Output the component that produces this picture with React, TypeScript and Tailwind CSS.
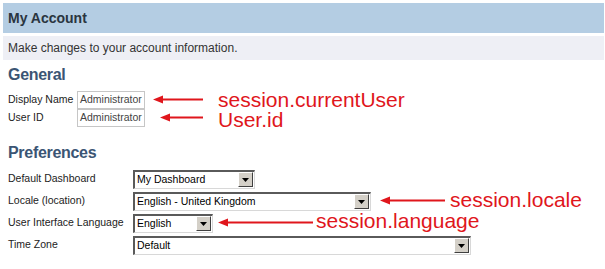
import { FC } from "react";

const RED = "#e0161c";

const Arrow: FC<{ left: number; top: number; width: number }> = ({ left, top, width }) => (
  <svg
    className="absolute"
    style={{ left, top: top - 4 }}
    width={width}
    height={9}
    viewBox={`0 0 ${width} 9`}
  >
    <polygon points="0,4.5 10,0.5 10,8.5" fill={RED} />
    <rect x={8} y={3.5} width={width - 8} height={2} fill={RED} />
  </svg>
);

const Note: FC<{ left: number; top: number; children: string }> = ({ left, top, children }) => (
  <span
    className="absolute text-[21px] leading-[19px] text-[#e0161c] whitespace-nowrap"
    style={{ left, top }}
  >
    {children}
  </span>
);

const TextField: FC<{ value: string }> = ({ value }) => (
  <div className="h-[18px] w-[68px] border border-[#c6c6c6] bg-white flex items-center pl-[2px] text-[10.5px] text-[#444]">
    {value}
  </div>
);

const ClassicSelect: FC<{ value: string; width: string }> = ({ value, width }) => (
  <div
    className={`${width} h-[19px] flex items-center bg-white border-t-2 border-l-2 border-t-[#5a5a5a] border-l-[#5a5a5a] border-b border-r border-b-[#d8d8d8] border-r-[#d8d8d8]`}
  >
    <span className="flex-1 pl-[2px] text-[10.5px] text-black truncate">{value}</span>
    <div className="w-[15px] h-[15px] mr-[1px] bg-[#d4d0c8] border border-t-white border-l-white border-b-[#404040] border-r-[#404040] flex items-center justify-center">
      <svg width="7" height="4" viewBox="0 0 7 4">
        <polygon points="0,0 7,0 3.5,4" fill="#000" />
      </svg>
    </div>
  </div>
);

const Row: FC<{ label: string; labelWidth: string; children: React.ReactNode; height: string }> = ({
  label,
  labelWidth,
  children,
  height,
}) => (
  <div className={`flex items-center ${height}`}>
    <span className={`${labelWidth} shrink-0 text-[10.5px] text-[#222]`}>{label}</span>
    {children}
  </div>
);

export default function App() {
  return (
    <div className="relative w-[605px] h-[269px] bg-white overflow-hidden font-['Liberation_Sans',Arial,sans-serif]">
      <div className="ml-[3px] mr-[1px] mt-[3px] h-[30px] bg-[#b4cde3] flex items-center px-[5px] text-[14px] font-bold text-[#2a3540]">
        My Account
      </div>
      <div className="ml-[3px] mr-[1px] mt-[3px] h-[24px] bg-[#eeeff5] flex items-center px-[5px] text-[12px] text-[#333]">
        Make changes to your account information.
      </div>

      <div className="px-[8px]">
        <h2 className="mt-[6px] h-[18px] text-[16px] leading-[18px] font-bold tracking-[-0.3px] text-[#3b5574]">General</h2>
        <div className="mt-[7px] flex flex-col">
          <Row label="Display Name" labelWidth="w-[69px]" height="h-[18px]">
            <TextField value="Administrator" />
          </Row>
          <Row label="User ID" labelWidth="w-[69px]" height="h-[18px]">
            <TextField value="Administrator" />
          </Row>
        </div>

        <h2 className="mt-[17px] h-[18px] text-[16px] leading-[18px] font-bold tracking-[-0.3px] text-[#3b5574]">Preferences</h2>
        <div className="mt-[6px] flex flex-col">
          <Row label="Default Dashboard" labelWidth="w-[125px]" height="h-[22px]">
            <ClassicSelect value="My Dashboard" width="w-[122px]" />
          </Row>
          <Row label="Locale (location)" labelWidth="w-[125px]" height="h-[22px]">
            <ClassicSelect value="English - United Kingdom" width="w-[238px]" />
          </Row>
          <Row label="User Interface Language" labelWidth="w-[125px]" height="h-[22px]">
            <ClassicSelect value="English" width="w-[80px]" />
          </Row>
          <Row label="Time Zone" labelWidth="w-[125px]" height="h-[22px]">
            <ClassicSelect value="Default" width="w-[338px]" />
          </Row>
        </div>
      </div>

      {/* annotations */}
      <Arrow left={153} top={99} width={50} />
      <Note left={218} top={90}>session.currentUser</Note>
      <Arrow left={160} top={117} width={43} />
      <Note left={218} top={110}>User.id</Note>
      <Arrow left={380} top={200} width={65} />
      <Note left={450} top={190}>session.locale</Note>
      <Arrow left={218} top={222} width={95} />
      <Note left={316} top={211}>session.language</Note>
    </div>
  );
}
